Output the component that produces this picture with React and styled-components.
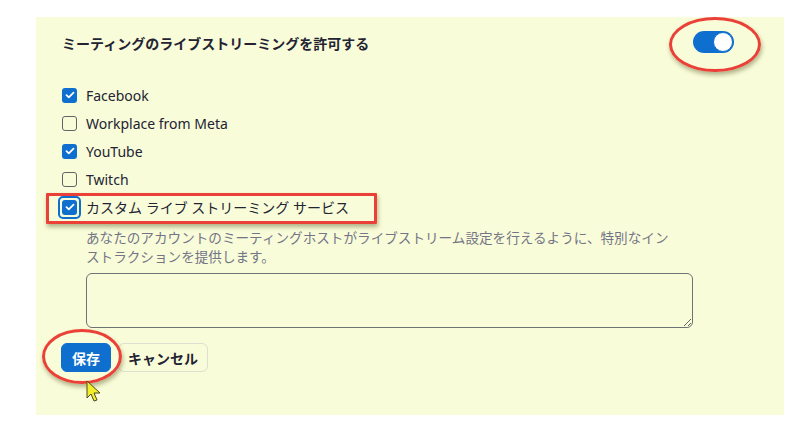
import React from "react";
import styled, { createGlobalStyle } from "styled-components";

const GlobalStyle = createGlobalStyle`
  body {
    margin: 0;
    background: #ffffff;
    font-family: "Noto Sans", "Noto Sans CJK JP", sans-serif;
  }
`;

const Page = styled.div`
  width: 802px;
  height: 422px;
  padding: 17px 0 0 36px;
  box-sizing: border-box;
  overflow: hidden;
`;

const Panel = styled.section`
  position: relative;
  width: 748px;
  height: 398px;
  box-sizing: border-box;
  padding: 14px 50px 0 26px;
  background: #f8fcd8;
`;

const Header = styled.div`
  display: flex;
  align-items: center;
  justify-content: space-between;
  height: 22px;
`;

const Title = styled.h3`
  margin: 2px 0 0 0;
  font-size: 14px;
  font-weight: 700;
  color: #232333;
  font-family: "Noto Sans CJK JP", sans-serif;
`;

const Toggle = styled.div`
  position: relative;
  width: 41px;
  height: 22px;
  border-radius: 11px;
  background: #0e6fce;
  &::after {
    content: "";
    position: absolute;
    right: 1px;
    top: 1px;
    width: 18px;
    height: 18px;
    border-radius: 50%;
    background: #ffffff;
    border: 1px solid #0e6fce;
  }
`;

const List = styled.div`
  display: flex;
  flex-direction: column;
  margin-top: 28px;
`;

const Row = styled.label`
  display: flex;
  align-items: center;
  gap: 9px;
  height: 28px;
  font-size: 14px;
  color: #232333;
  font-family: "Noto Sans", "Noto Sans CJK JP", sans-serif;
`;

const Box = styled.span`
  position: relative;
  display: inline-flex;
  align-items: center;
  justify-content: center;
  width: 15px;
  height: 15px;
  box-sizing: border-box;
  border-radius: 3px;
  border: ${(p) => (p.checked ? "none" : "1.5px solid #5f6468")};
  background: ${(p) => (p.checked ? "#0e6fce" : "transparent")};
  ${(p) =>
    p.focused &&
    `
    &::before {
      content: "";
      position: absolute;
      inset: -4px;
      border: 2px solid #0e6fce;
      border-radius: 5px;
    }
  `}
`;

const Description = styled.p`
  margin: 7px 0 0 24px;
  width: 590px;
  font-size: 13.6px;
  line-height: 18.5px;
  color: #747487;
  font-family: "Noto Sans CJK JP", sans-serif;
`;

const Notes = styled.textarea`
  display: block;
  margin: 8px 0 0 24px;
  width: 607px;
  height: 55px;
  box-sizing: border-box;
  border: 1px solid #6b7375;
  border-radius: 6px;
  background: transparent;
  resize: vertical;
`;

const Actions = styled.div`
  display: flex;
  gap: 7px;
  margin: 15px 0 0 -1px;
`;

const Button = styled.button`
  height: 29px;
  padding: 0 ${(p) => (p.primary ? "10px" : "9px")};
  border-radius: 6px;
  border: 1px solid ${(p) => (p.primary ? "#0e6fce" : "#dedfd0")};
  background: ${(p) => (p.primary ? "#0e6fce" : "transparent")};
  color: ${(p) => (p.primary ? "#ffffff" : "#232333")};
  font-size: 14px;
  font-weight: 700;
  font-family: "Noto Sans CJK JP", sans-serif;
`;

const Ring = styled.div`
  position: absolute;
  left: ${(p) => p.x}px;
  top: ${(p) => p.y}px;
  width: ${(p) => p.w}px;
  height: ${(p) => p.h}px;
  box-sizing: border-box;
  border: 3px solid #ea4037;
  border-radius: ${(p) => (p.round ? "50%" : "1px")};
  box-shadow: 1px 3px 4px rgba(90, 90, 40, 0.45);
  pointer-events: none;
`;

const Cursor = styled.svg`
  position: absolute;
  left: 50px;
  top: 363px;
`;

const Check = () => (
  <svg width="10" height="8" viewBox="0 0 10 8">
    <path d="M1.5 4.2 L3.8 6.3 L8.5 1.6" fill="none" stroke="#fff" strokeWidth="1.8" strokeLinecap="round" strokeLinejoin="round" />
  </svg>
);

const services = [
  { name: "Facebook", checked: true },
  { name: "Workplace from Meta", checked: false },
  { name: "YouTube", checked: true },
  { name: "Twitch", checked: false },
  { name: "カスタム ライブ ストリーミング サービス", checked: true, focused: true },
];

export default function App() {
  return (
    <Page>
      <GlobalStyle />
      <Panel>
        <Header>
          <Title>ミーティングのライブストリーミングを許可する</Title>
          <Toggle />
        </Header>
        <List>
          {services.map((s) => (
            <Row key={s.name}>
              <Box checked={s.checked} focused={s.focused}>
                {s.checked && <Check />}
              </Box>
              {s.name}
            </Row>
          ))}
        </List>
        <Description>
          あなたのアカウントのミーティングホストがライブストリーム設定を行えるように、特別なインストラクションを提供します。
        </Description>
        <Notes />
        <Actions>
          <Button primary>保存</Button>
          <Button>キャンセル</Button>
        </Actions>

        <Ring round x={633} y={0} w={92} h={55} />
        <Ring x={10} y={176} w={331} h={31} />
        <Ring round x={6} y={312} w={80} h={55} />
        <Cursor width="16" height="24" viewBox="0 0 16 24">
          <path d="M1 1 L1 18 L5 14 L8 21 L11 20 L8 13 L14 13 Z" fill="#f2ef2a" stroke="#4a4a20" strokeWidth="1" strokeLinejoin="round" />
        </Cursor>
      </Panel>
    </Page>
  );
}
